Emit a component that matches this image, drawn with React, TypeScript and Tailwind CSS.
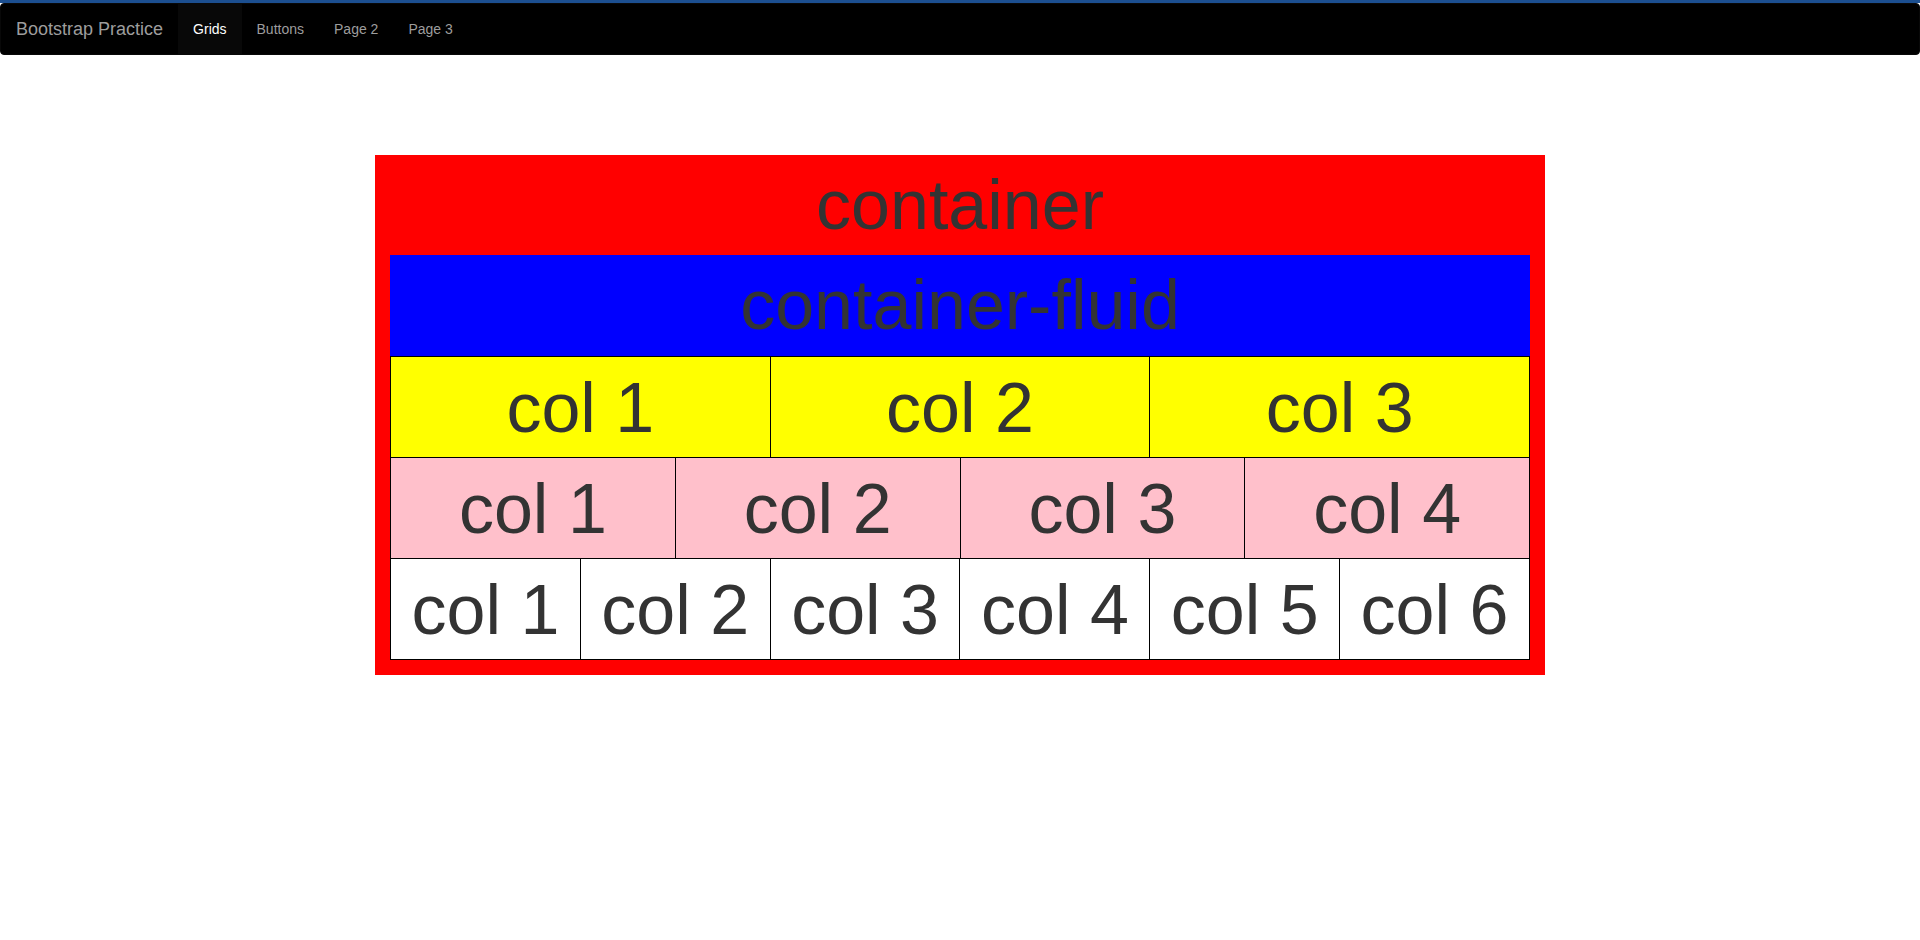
const links = [
  { label: "Grids", active: true },
  { label: "Buttons", active: false },
  { label: "Page 2", active: false },
  { label: "Page 3", active: false },
];

const rows = [
  { bg: "bg-[#ffff00]", count: 3 },
  { bg: "bg-[#ffc0cb]", count: 4 },
  { bg: "bg-white", count: 6 },
];

function Navbar() {
  return (
    <nav className="flex h-[52px] items-stretch rounded-[4px] border border-[#080808] bg-black">
      <a className="flex items-center px-[15px] text-[18px] text-[#9d9d9d]">Bootstrap Practice</a>
      <ul className="flex">
        {links.map((l) => (
          <li
            key={l.label}
            className={
              l.active
                ? "flex items-center bg-[#080808] px-[15px] text-[14px] text-white"
                : "flex items-center px-[15px] text-[14px] text-[#9d9d9d]"
            }
          >
            {l.label}
          </li>
        ))}
      </ul>
    </nav>
  );
}

function GridRow({ bg, count, last }: { bg: string; count: number; last: boolean }) {
  const cells = Array.from({ length: count }, (_, i) => i + 1);
  return (
    <div className="flex">
      {cells.map((n) => (
        <div
          key={n}
          className={[
            "flex flex-1 items-center justify-center border-l border-t border-black pt-[2px] text-[70px] leading-[1.1] text-[#333]",
            bg,
            last ? "h-[102px] border-b" : "h-[101px]",
            n === count ? "border-r" : "",
          ].join(" ")}
        >
          col {n}
        </div>
      ))}
    </div>
  );
}

export default function App() {
  return (
    <div className="min-h-[940px] bg-white font-['Liberation_Sans',Arial,sans-serif]">
      <div className="h-[3px] bg-[#1c4f90]" />
      <Navbar />
      <div className="mx-auto mt-[100px] w-[1170px] bg-[#ff0000] px-[15px] pb-[15px]">
        <h1 className="flex h-[100px] items-center justify-center text-[70px] leading-[1.1] text-[#333]">container</h1>
        <div className="flex h-[101px] items-center justify-center bg-[#0000ff] text-[70px] leading-[1.1] text-[#333]">
          container-fluid
        </div>
        {rows.map((r, i) => (
          <GridRow key={i} bg={r.bg} count={r.count} last={i === rows.length - 1} />
        ))}
      </div>
    </div>
  );
}
